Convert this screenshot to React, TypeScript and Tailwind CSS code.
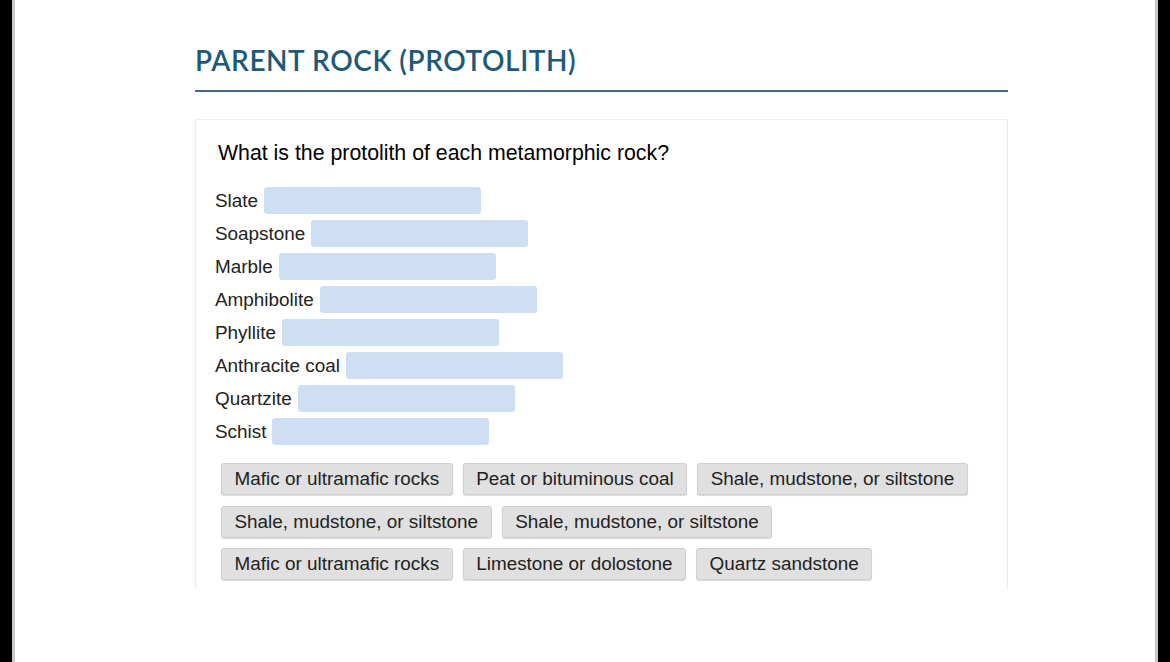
const rows = [
  'Slate',
  'Soapstone',
  'Marble',
  'Amphibolite',
  'Phyllite',
  'Anthracite coal',
  'Quartzite',
  'Schist',
];

const answers = [
  ['Mafic or ultramafic rocks', 'Peat or bituminous coal', 'Shale, mudstone, or siltstone'],
  ['Shale, mudstone, or siltstone', 'Shale, mudstone, or siltstone'],
  ['Mafic or ultramafic rocks', 'Limestone or dolostone', 'Quartz sandstone'],
];

const App = () => {
  return (
    <div className="flex h-[662px] w-[1170px] overflow-hidden bg-black">
      <div className="ml-[12px] w-[3px] bg-[#c8c8c8]" />
      <div className="flex-1 bg-white">
        <div className="ml-[180px] w-[813px] pt-[44px]">
          <h2 className="border-b-2 border-[#3f6b85] pb-[14px] font-['Lato',sans-serif] text-[28px] font-semibold leading-[32px] tracking-[0.02em] text-[#1d5a78]">
            PARENT ROCK (PROTOLITH)
          </h2>
          <div className="mt-[27px] h-[471px] border-x border-t border-[#ececec] pl-[19px] pt-[19px] font-['Liberation_Sans',Arial,sans-serif] text-[18.9px] text-black">
            <p className="ml-[3px] text-[21.3px] leading-[28px]">What is the protolith of each metamorphic rock?</p>
            <div className="mt-[20px] flex flex-col gap-[6px]">
              {rows.map((r) => (
                <div key={r} className="flex items-center">
                  <span className="leading-[27px] text-[#222]">{r}</span>
                  <span className="ml-[6px] h-[27px] w-[217px] rounded-[3px] bg-[#cedff4]" />
                </div>
              ))}
            </div>
            <div className="ml-[6px] mt-[18px] flex flex-col gap-[10.5px]">
              {answers.map((line, i) => (
                <div key={i} className="flex gap-[10px]">
                  {line.map((a, j) => (
                    <span
                      key={j}
                      className="h-[32px] rounded-[3px] border border-[#cfcfcf] bg-[#e0e0e0] px-[12.5px] leading-[30px] text-[#222] shadow-[0_1px_1px_rgba(0,0,0,0.15)]"
                    >
                      {a}
                    </span>
                  ))}
                </div>
              ))}
            </div>
          </div>
        </div>
      </div>
      <div className="w-[3px] bg-[#c8c8c8]" />
      <div className="w-[12px] bg-black" />
    </div>
  );
};

export default App;
